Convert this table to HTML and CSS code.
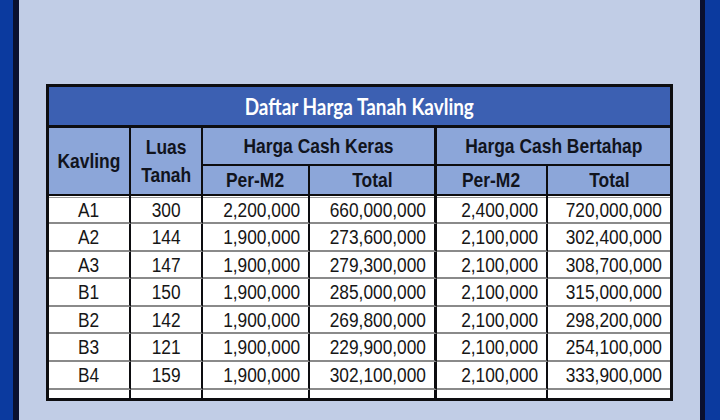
FILE: index.html
```html
<!DOCTYPE html>
<html lang="id">
<head>
<meta charset="utf-8">
<title>Daftar Harga Tanah Kavling</title>
<link rel="stylesheet" href="styles.css">
</head>
<body>
<div class="page">
  <div class="edge-left"></div>
  <main class="content">
    <div class="sheet">
      <div class="title"><span class="s">Daftar Harga Tanah Kavling</span></div>

      <div class="hd k tall"><span class="s">Kavling</span></div>
      <div class="hd l tall"><span class="s">Luas<br>Tanah</span></div>
      <div class="hd grp t1"><span class="s">Harga Cash Keras</span></div>
      <div class="hd grp t2"><span class="s">Harga Cash Bertahap</span></div>
      <div class="hd p1"><span class="s">Per-M2</span></div>
      <div class="hd t1"><span class="s">Total</span></div>
      <div class="hd p2"><span class="s">Per-M2</span></div>
      <div class="hd t2"><span class="s">Total</span></div>

      <div class="td k first"><span class="s">A1</span></div>
      <div class="td l first"><span class="s">300</span></div>
      <div class="td p1 num first"><span class="s">2,200,000</span></div>
      <div class="td t1 num first"><span class="s">660,000,000</span></div>
      <div class="td p2 num first"><span class="s">2,400,000</span></div>
      <div class="td t2 num first"><span class="s">720,000,000</span></div>

      <div class="td k"><span class="s">A2</span></div>
      <div class="td l"><span class="s">144</span></div>
      <div class="td p1 num"><span class="s">1,900,000</span></div>
      <div class="td t1 num"><span class="s">273,600,000</span></div>
      <div class="td p2 num"><span class="s">2,100,000</span></div>
      <div class="td t2 num"><span class="s">302,400,000</span></div>

      <div class="td k"><span class="s">A3</span></div>
      <div class="td l"><span class="s">147</span></div>
      <div class="td p1 num"><span class="s">1,900,000</span></div>
      <div class="td t1 num"><span class="s">279,300,000</span></div>
      <div class="td p2 num"><span class="s">2,100,000</span></div>
      <div class="td t2 num"><span class="s">308,700,000</span></div>

      <div class="td k"><span class="s">B1</span></div>
      <div class="td l"><span class="s">150</span></div>
      <div class="td p1 num"><span class="s">1,900,000</span></div>
      <div class="td t1 num"><span class="s">285,000,000</span></div>
      <div class="td p2 num"><span class="s">2,100,000</span></div>
      <div class="td t2 num"><span class="s">315,000,000</span></div>

      <div class="td k"><span class="s">B2</span></div>
      <div class="td l"><span class="s">142</span></div>
      <div class="td p1 num"><span class="s">1,900,000</span></div>
      <div class="td t1 num"><span class="s">269,800,000</span></div>
      <div class="td p2 num"><span class="s">2,100,000</span></div>
      <div class="td t2 num"><span class="s">298,200,000</span></div>

      <div class="td k"><span class="s">B3</span></div>
      <div class="td l"><span class="s">121</span></div>
      <div class="td p1 num"><span class="s">1,900,000</span></div>
      <div class="td t1 num"><span class="s">229,900,000</span></div>
      <div class="td p2 num"><span class="s">2,100,000</span></div>
      <div class="td t2 num"><span class="s">254,100,000</span></div>

      <div class="td k"><span class="s">B4</span></div>
      <div class="td l"><span class="s">159</span></div>
      <div class="td p1 num"><span class="s">1,900,000</span></div>
      <div class="td t1 num"><span class="s">302,100,000</span></div>
      <div class="td p2 num"><span class="s">2,100,000</span></div>
      <div class="td t2 num"><span class="s">333,900,000</span></div>

      <div class="td k empty"></div>
      <div class="td l empty"></div>
      <div class="td p1 empty"></div>
      <div class="td t1 empty"></div>
      <div class="td p2 empty"></div>
      <div class="td t2 empty"></div>
    </div>
  </main>
  <div class="edge-right"></div>
</div>
</body>
</html>
```

FILE: styles.css
```css
* { box-sizing: border-box; }

html, body {
  margin: 0;
  padding: 0;
}

body {
  background: #c1cde6;
  font-family: "Liberation Sans", Arial, sans-serif;
}

.page {
  display: flex;
  width: 720px;
  height: 420px;
  overflow: hidden;
}

.edge-left {
  width: 19px;
  background: #0b3a9f;
  border-right: 6px solid #0a1030;
}

.edge-right {
  width: 20px;
  background: #0b3a9f;
  border-left: 5px solid #0a1030;
}

.content {
  flex: 1;
  background: #c1cde6;
}

.sheet {
  margin: 84px 0 0 27px;
  width: 627px;
  border: 3px solid #0d0d10;
  display: grid;
  grid-template-columns: 82px 72px 107px 127px 111px 122px;
  grid-template-rows: 41px 38px 30px 28px 28px 27px 28px 27px 28px 28px 8px;
  background: #ffffff;
}

.title {
  grid-column: 1 / -1;
  background: #3c60b2;
  border-bottom: 3px solid #0d0d10;
  display: flex;
  align-items: center;
  justify-content: center;
  padding-top: 1px;
  color: #ffffff;
  font-family: Lato, "Open Sans", sans-serif;
  font-weight: 700;
  font-size: 22px;
}

.title .s { transform: scaleX(0.86); }

.hd {
  background: #8ca6d9;
  border-bottom: 2px solid #0d0d10;
  display: flex;
  align-items: center;
  justify-content: center;
  text-align: center;
  font-weight: 700;
  font-size: 21px;
  line-height: 28px;
  color: #11141d;
}

.hd .s { transform: scaleX(0.83); }

.tall { grid-row: span 2; }
.grp { grid-column: span 2; }

.k, .l, .p1, .p2 { border-right: 2px solid #0d0d10; }
.t1 { border-right: 3px solid #0d0d10; }

.td {
  border-bottom: 2px solid #8a8a8a;
  display: flex;
  align-items: center;
  justify-content: center;
  font-size: 20.5px;
  color: #161616;
  background: #ffffff;
}

.td .s { transform: scaleX(0.845); }

.td.num {
  justify-content: flex-end;
  padding-right: 8px;
}

.td.num .s { transform-origin: right center; }

.td.first {
  box-shadow: inset 0 1px 0 #ffffff, inset 0 2px 0 #9a9a9a;
  padding-top: 2px;
}

.td.empty { border-bottom: 0; }

.s { display: inline-block; white-space: nowrap; }
```
